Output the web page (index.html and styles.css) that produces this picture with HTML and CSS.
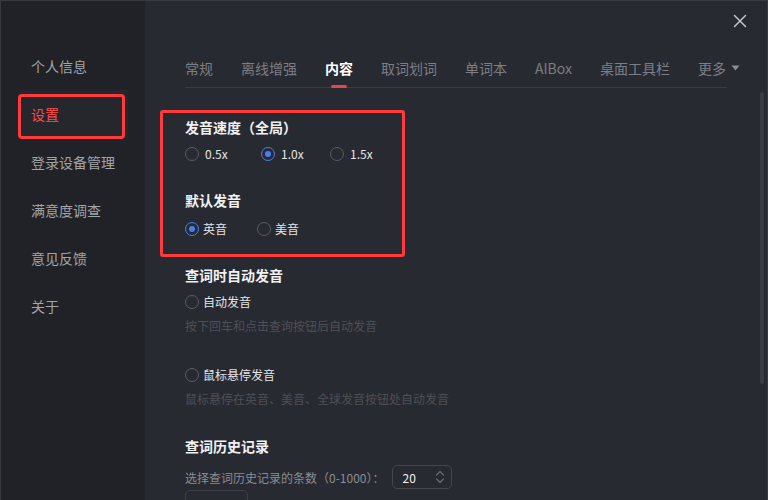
FILE: index.html
```html
<!DOCTYPE html>
<html lang="zh-CN">
<head>
<meta charset="utf-8">
<title>设置</title>
<link rel="stylesheet" href="styles.css">
</head>
<body>
<div class="app">
  <aside class="sidebar">
    <ul class="nav">
      <li class="nav-item">个人信息</li>
      <li class="nav-item active">设置</li>
      <li class="nav-item">登录设备管理</li>
      <li class="nav-item">满意度调查</li>
      <li class="nav-item">意见反馈</li>
      <li class="nav-item">关于</li>
    </ul>
  </aside>
  <main class="main">
    <button class="close" aria-label="关闭">
      <svg width="14" height="14" viewBox="0 0 14 14"><path d="M1.5 1.5 L12.5 12.5 M12.5 1.5 L1.5 12.5" stroke="#c4c6ca" stroke-width="1.5" stroke-linecap="round" fill="none"/></svg>
    </button>
    <nav class="tabs">
      <span class="tab">常规</span>
      <span class="tab">离线增强</span>
      <span class="tab active">内容</span>
      <span class="tab">取词划词</span>
      <span class="tab">单词本</span>
      <span class="tab">AIBox</span>
      <span class="tab">桌面工具栏</span>
      <span class="tab more">更多<svg width="9" height="6" viewBox="0 0 9 6"><path d="M0.5 0.5 H8.5 L4.5 5.5 Z" fill="#8a8d93"/></svg></span>
    </nav>

    <section class="content">
      <div class="annot"></div>
      <h3 class="title first">发音速度（全局）</h3>
      <div class="radios">
        <label class="radio speed"><span class="dot"></span><span class="lbl">0.5x</span></label>
        <label class="radio speed checked"><span class="dot"></span><span class="lbl">1.0x</span></label>
        <label class="radio speed"><span class="dot"></span><span class="lbl">1.5x</span></label>
      </div>

      <h3 class="title">默认发音</h3>
      <div class="radios accent-row">
        <label class="radio accent checked"><span class="dot"></span><span class="lbl">英音</span></label>
        <label class="radio accent"><span class="dot"></span><span class="lbl">美音</span></label>
      </div>

      <h3 class="title">查词时自动发音</h3>
      <div class="radios">
        <label class="radio"><span class="dot"></span><span class="lbl">自动发音</span></label>
      </div>
      <p class="desc">按下回车和点击查询按钮后自动发音</p>
      <div class="radios gap-top">
        <label class="radio"><span class="dot"></span><span class="lbl">鼠标悬停发音</span></label>
      </div>
      <p class="desc">鼠标悬停在英音、美音、全球发音按钮处自动发音</p>

      <h3 class="title history">查词历史记录</h3>
      <div class="hist-row">
        <span class="hist-label">选择查词历史记录的条数（0-1000）：</span>
        <div class="num">
          <span>20</span>
          <svg width="10" height="14" viewBox="0 0 10 14"><path d="M1.5 5 L5 1.5 L8.5 5 M1.5 9 L5 12.5 L8.5 9" stroke="#6a6d73" stroke-width="1.2" fill="none" stroke-linecap="round" stroke-linejoin="round"/></svg>
        </div>
      </div>
      <div class="next-box"></div>
    </section>
    <div class="scrollbar"></div>
  </main>
</div>
</body>
</html>
```

FILE: styles.css
```css
*, *::before, *::after { box-sizing: border-box; margin: 0; padding: 0; }
html, body { width: 768px; height: 500px; overflow: hidden; background: #282a31; }
body {
  font-family: "Noto Sans CJK SC", "Noto Sans", sans-serif;
  color: #e6e7e9;
}
.app {
  display: flex;
  width: 768px;
  height: 500px;
  border-top: 1px solid #393a40;
  border-left: 1px solid #393a40;
  border-right: 1px solid #3a3c42;
  overflow: hidden;
}
.sidebar {
  width: 144px;
  flex: none;
  background: #212227;
}
.nav { list-style: none; padding-top: 41px; }
.nav-item {
  position: relative;
  height: 48px;
  line-height: 48px;
  padding-left: 30px;
  font-size: 14px;
  color: #a2a5aa;
}
.nav-item.active {
  color: #ff4b4b;
  background: linear-gradient(to right, transparent 19px, #26272c 19px, #26272c 127px, transparent 127px);
}
.nav-item.active::after {
  content: "";
  position: absolute;
  left: 17px;
  top: 4px;
  width: 107px;
  height: 45px;
  border: 3px solid #ff3b3b;
  border-radius: 4px;
}
.main {
  position: relative;
  flex: 1;
  padding-left: 40px;
  background: #282a31;
}
.close {
  position: absolute;
  right: 20px;
  top: 13px;
  width: 14px;
  height: 14px;
  border: none;
  background: none;
  display: flex;
}
.tabs {
  display: flex;
  gap: 28px;
  width: 542px;
  margin-top: 57px;
  height: 30px;
  border-bottom: 1px solid #3a3c42;
  white-space: nowrap;
}
.tab {
  position: relative;
  font-size: 14px;
  line-height: 20px;
  height: 20px;
  color: #7b7e85;
}
.tab.active { color: #ffffff; font-weight: 700; }
.tab.active::after {
  content: "";
  position: absolute;
  left: 6px;
  right: 6px;
  bottom: -10px;
  height: 3px;
  border-radius: 2px;
  background: #e5484d;
}
.tab.more { display: flex; align-items: center; gap: 5px; }
.content { position: relative; display: flow-root; }
.annot {
  position: absolute;
  left: -25px;
  top: 22px;
  width: 245px;
  height: 147px;
  border: 3px solid #ff3b3b;
  border-radius: 3px;
  pointer-events: none;
}
.title {
  font-size: 14px;
  line-height: 20px;
  font-weight: 700;
  color: #f0f1f3;
  margin-top: 26px;
}
.title.first { margin-top: 29px; }
.title.history { margin-top: 27px; }
.radios { display: flex; margin-top: 7px; height: 20px; }
.radios.accent-row { margin-top: 9px; }
.radios.gap-top { margin-top: 29px; }
.radio { display: flex; align-items: center; font-size: 12px; line-height: 20px; color: #e4e5e7; }
.dot {
  width: 14px;
  height: 14px;
  border: 1px solid #5a5c62;
  border-radius: 50%;
  display: flex;
  align-items: center;
  justify-content: center;
  flex: none;
}
.radio .lbl { margin-left: 4px; }
.radio.speed .lbl { margin-left: 6px; }
.radio.speed:nth-child(1) { width: 76px; }
.radio.speed:nth-child(2) { width: 69px; }
.radio.accent { margin-right: 30px; }
.radio.checked .dot { border-color: #4a7df5; }
.radio.checked .dot::after {
  content: "";
  width: 6px;
  height: 6px;
  border-radius: 50%;
  background: #4a7df5;
}
.desc {
  font-size: 12px;
  line-height: 20px;
  color: #4d5057;
  margin-top: 4px;
}
.hist-row {
  display: flex;
  align-items: center;
  margin-top: 9px;
  height: 24px;
}
.hist-label { font-size: 12px; color: #8a8d93; }
.num {
  margin-left: 8px;
  width: 60px;
  height: 24px;
  border: 1px solid #44464c;
  border-radius: 5px;
  display: flex;
  align-items: center;
  justify-content: space-between;
  padding: 0 6px 0 9px;
  font-size: 12px;
  color: #f0f1f3;
}
.next-box {
  width: 63px;
  height: 30px;
  margin-top: 1px;
  border: 1px solid #3d3f45;
  border-radius: 5px;
}
.scrollbar {
  position: absolute;
  right: 3px;
  top: 91px;
  width: 4px;
  height: 292px;
  border-radius: 2px;
  background: #3b3c40;
}
```
